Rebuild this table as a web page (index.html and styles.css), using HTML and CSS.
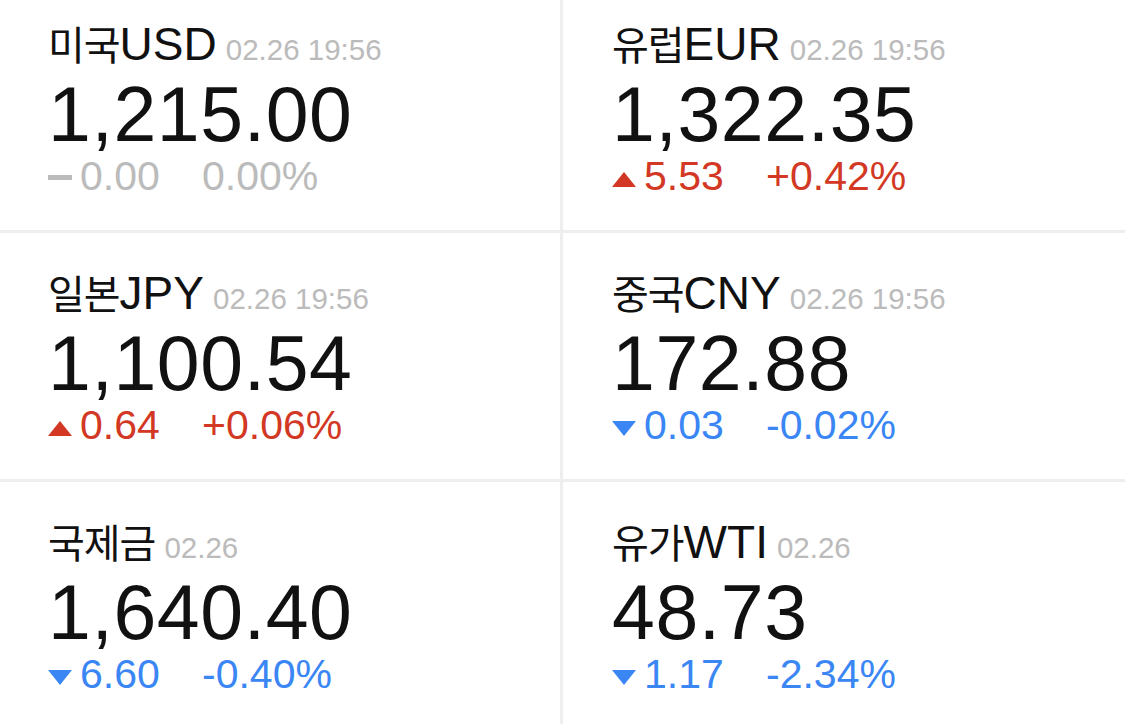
FILE: index.html
```html
<!DOCTYPE html>
<html lang="ko">
<head>
    <meta charset="UTF-8">
    <title>환율</title>
    <link rel="stylesheet" href="styles.css">
</head>
<body>
    <div class="board">
        <!-- USD -->
        <div class="cell">
            <div class="head"><span class="ko">미국</span>USD<span class="time">02.26 19:56</span></div>
            <div class="price">1,215.00</div>
            <div class="chg same">
                <span class="val"><i class="dash"></i>0.00</span><span>0.00%</span>
            </div>
        </div>

        <!-- EUR -->
        <div class="cell">
            <div class="head"><span class="ko">유럽</span>EUR<span class="time">02.26 19:56</span></div>
            <div class="price">1,322.35</div>
            <div class="chg up">
                <span class="val"><svg class="arr" viewBox="0 0 24 15"><polygon points="12,0 24,15 0,15"/></svg>5.53</span><span>+0.42%</span>
            </div>
        </div>

        <!-- JPY -->
        <div class="cell">
            <div class="head"><span class="ko">일본</span>JPY<span class="time">02.26 19:56</span></div>
            <div class="price">1,100.54</div>
            <div class="chg up">
                <span class="val"><svg class="arr" viewBox="0 0 24 15"><polygon points="12,0 24,15 0,15"/></svg>0.64</span><span>+0.06%</span>
            </div>
        </div>

        <!-- CNY -->
        <div class="cell">
            <div class="head"><span class="ko">중국</span>CNY<span class="time">02.26 19:56</span></div>
            <div class="price">172.88</div>
            <div class="chg down">
                <span class="val"><svg class="arr" viewBox="0 0 24 15"><polygon points="0,0 24,0 12,15"/></svg>0.03</span><span>-0.02%</span>
            </div>
        </div>

        <!-- gold -->
        <div class="cell">
            <div class="head"><span class="ko">국제금</span><span class="time">02.26</span></div>
            <div class="price">1,640.40</div>
            <div class="chg down">
                <span class="val"><svg class="arr" viewBox="0 0 24 15"><polygon points="0,0 24,0 12,15"/></svg>6.60</span><span>-0.40%</span>
            </div>
        </div>

        <!-- WTI -->
        <div class="cell">
            <div class="head"><span class="ko">유가</span>WTI<span class="time">02.26</span></div>
            <div class="price">48.73</div>
            <div class="chg down">
                <span class="val"><svg class="arr" viewBox="0 0 24 15"><polygon points="0,0 24,0 12,15"/></svg>1.17</span><span>-2.34%</span>
            </div>
        </div>
    </div>
</body>
</html>
```

FILE: styles.css
```css
* {
    margin: 0;
    padding: 0;
    box-sizing: border-box;
}

html, body {
    height: 100%;
    overflow: hidden;
    background: #fff;
    font-family: "Liberation Sans", "Noto Sans CJK KR", sans-serif;
    color: #111;
}

/* list is scrolled a little, first row is cut at the top */
.board {
    display: grid;
    grid-template-columns: 560px 562px;
    grid-auto-rows: 246px;
    gap: 3px;
    background: #eeeeee;
    margin-top: -16px;
}

.cell {
    background: #fff;
    padding: 35px 0 0 48px;
}

.cell:nth-child(2n) {
    padding-left: 49px;
}

.head {
    font-size: 46px;
    line-height: 50px;
    height: 50px;
    white-space: nowrap;
}

.ko {
    font-family: "Noto Sans CJK KR", sans-serif;
    font-size: 40px;
    letter-spacing: -1px;
    line-height: 1;
}

.time {
    font-size: 29.5px;
    color: #bbbbbb;
    margin-left: 9px;
    line-height: 1;
}

.price {
    font-size: 77px;
    line-height: 80px;
    margin-top: 5px;
    letter-spacing: 0.6px;
}

.chg {
    font-size: 41px;
    line-height: 44px;
    white-space: nowrap;
}

.chg .val {
    display: inline-block;
    width: 154px;
}

.arr {
    width: 24px;
    height: 15px;
    margin-right: 8px;
    vertical-align: 3px;
}

.dash {
    display: inline-block;
    width: 24px;
    height: 5px;
    background: #bbbbbb;
    margin-right: 8px;
    vertical-align: 10px;
}

.same { color: #bbbbbb; }

.up { color: #d23823; }
.up .arr { fill: #d23823; }

.down { color: #3a86f5; }
.down .arr { fill: #3a86f5; }
```
